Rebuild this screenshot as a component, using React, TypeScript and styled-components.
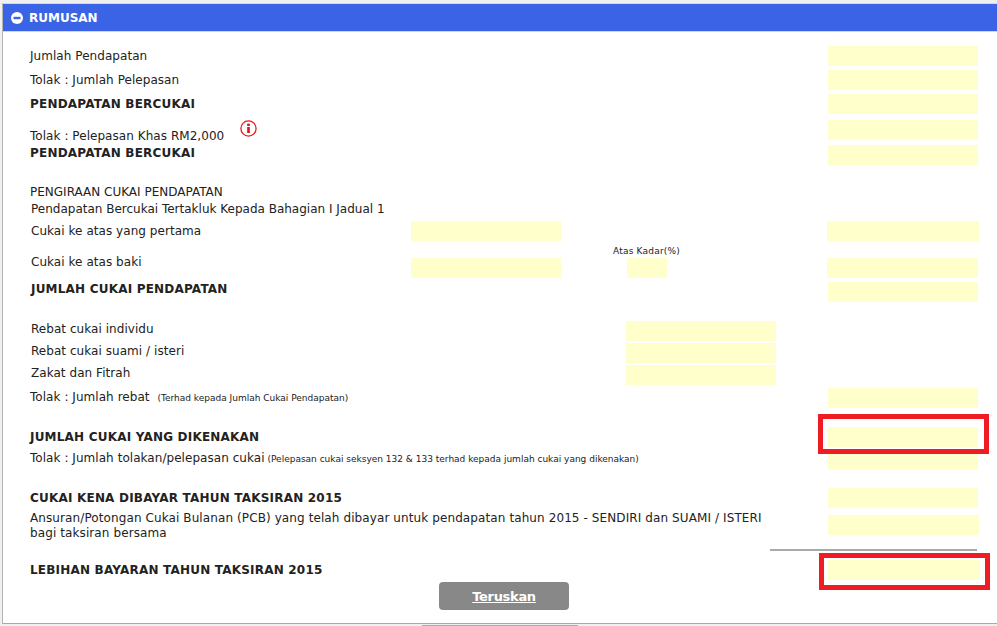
import React from 'react';
import styled, { createGlobalStyle } from 'styled-components';

const GlobalStyle = createGlobalStyle`
  html, body {
    margin: 0;
    padding: 0;
    background: #fff;
  }
  body {
    font-family: "DejaVu Sans", Verdana, sans-serif;
    font-size: 12px;
    line-height: 16px;
    color: #222;
  }
`;

interface IRow {
  h: number;
  top?: number;
  indent?: number;
  bold?: boolean;
  info?: boolean;
  label?: React.ReactNode;
  note?: string;
  noteGap?: number;
  left?: boolean;
  mid?: boolean;
  rate?: boolean;
  right?: boolean;
  fieldTop?: number;
  bleedLeft?: number;
  bleedRight?: number;
  mark?: 'first' | 'second';
}

const Row: React.FC<IRow> = ({
  h, top = 0, indent = 0, bold, info, label, note, noteGap = 0, left, mid, rate,
  right = true, fieldTop = 0, bleedLeft = 0, bleedRight = 0, mark,
}) => (
  <RowWrapper $h={h}>
    <LabelCell $wide={!left && !mid}>
      <Label $top={top} $indent={indent} $bold={bold}>
        {label}
        {note && <Note $gap={noteGap}> {note}</Note>}
      </Label>
      {info && <InfoIcon />}
    </LabelCell>
    {left && <Field $col={2} $top={fieldTop} />}
    {mid && <Field $col={4} />}
    {rate && (
      <RateCell>
        <RateLabel>Atas Kadar(%)</RateLabel>
        <RateField />
      </RateCell>
    )}
    {right && (
      <Field $col={6} $top={fieldTop} $bleedLeft={bleedLeft} $bleedRight={bleedRight}>
        {mark && <RedMark $kind={mark} />}
      </Field>
    )}
  </RowWrapper>
);

const InfoIcon = () => (
  <InfoSvg viewBox="0 0 17 17" width="17" height="17">
    <circle cx="8.5" cy="8.5" r="7.6" fill="#fff" stroke="#e8191f" strokeWidth="1.3" />
    <rect x="7.2" y="7" width="2.6" height="6" fill="#d8141a" />
    <rect x="7.2" y="3.6" width="2.6" height="2.4" fill="#d8141a" />
  </InfoSvg>
);

const App: React.FC = () => {
  return (
    <>
      <GlobalStyle />
      <Page>
        <Panel>
          <Header>
            <Collapse viewBox="0 0 12 12" width="12" height="12">
              <circle cx="6" cy="6" r="6" fill="#fff" />
              <rect x="2.5" y="4.8" width="7" height="2.4" fill="#3b63e6" />
            </Collapse>
            RUMUSAN
          </Header>
          <Body>
            <Row h={24} top={2} label="Jumlah Pendapatan" />
            <Row h={24} top={2} label="Tolak : Jumlah Pelepasan" />
            <Row h={26} top={2} bold label="PENDAPATAN BERCUKAI" />
            <Row h={25} top={8} info label="Tolak : Pelepasan Khas RM2,000" />
            <Row h={38} top={0} bold label="PENDAPATAN BERCUKAI" />
            <Plain $before={1}>PENGIRAAN CUKAI PENDAPATAN</Plain>
            <Plain $indent={1} $after={5} $before={1}>Pendapatan Bercukai Tertakluk Kepada Bahagian I Jadual 1</Plain>
            <Row h={21} top={1} indent={1} left fieldTop={-1} bleedLeft={1} bleedRight={1} label="Cukai ke atas yang pertama" />
            <Row h={39} top={11} indent={1} left rate fieldTop={15} bleedLeft={1} label="Cukai ke atas baki" />
            <Row h={39} top={-1} indent={1} bold label="JUMLAH CUKAI PENDAPATAN" />
            <Row h={22} top={0} indent={1} mid right={false} label="Rebat cukai individu" />
            <Row h={22} top={0} indent={1} mid right={false} label="Rebat cukai suami / isteri" />
            <Row h={23} top={0} indent={1} mid right={false} label="Zakat dan Fitrah" />
            <Row h={39} top={1} noteGap={5} label="Tolak : Jumlah rebat" note="(Terhad kepada Jumlah Cukai Pendapatan)" />
            <Row h={23} top={2} bold mark="first" label="JUMLAH CUKAI YANG DIKENAKAN" />
            <Row h={38} top={0} label="Tolak : Jumlah tolakan/pelepasan cukai" note="(Pelepasan cukai seksyen 132 & 133 terhad kepada jumlah cukai yang dikenakan)" />
            <Row h={27} top={2} bold label="CUKAI KENA DIBAYAR TAHUN TAKSIRAN 2015" />
            <Row h={34} top={-4} bleedRight={1} label={<LongText>Ansuran/Potongan Cukai Bulanan (PCB) yang telah dibayar untuk pendapatan tahun 2015 - SENDIRI dan SUAMI / ISTERI bagi taksiran bersama</LongText>} />
            <Rule />
            <Row h={22} top={2} bold mark="second" bleedRight={2} label="LEBIHAN BAYARAN TAHUN TAKSIRAN 2015" />
            <Actions>
              <Button>Teruskan</Button>
            </Actions>
          </Body>
        </Panel>
        <Scrollbar />
      </Page>
    </>
  );
};

export default App;

// Styles |
//        v

const Page = styled.div`
  width: 997px;
  height: 626px;
  overflow: hidden;
  background: #f0f0f0;
`;

const Panel = styled.div`
  height: 620px;
  margin: 3px 0 0 2px;
  background: #fff;
  border-left: 1px solid #b4b4b4;
  border-bottom: 1px solid #aaa;
  display: flex;
  flex-direction: column;
  overflow: hidden;
`;

const Header = styled.div`
  height: 27px;
  display: flex;
  align-items: center;
  gap: 6px;
  padding-left: 8px;
  background: #3b63e6;
  border-top: 1px solid #d8d8d8;
  border-bottom: 1px solid #cdd6f0;
  color: #fff;
  font-weight: 700;
  font-size: 12px;
`;

const Collapse = styled.svg`
  flex: none;
`;

const Body = styled.div`
  flex: 1;
  padding: 14px 0 0 27px;
`;

const RowWrapper = styled.div<{ $h: number }>`
  display: grid;
  grid-template-columns: 381px 150px 65px 150px 52px 150px;
  align-items: start;
  height: ${({ $h }) => $h}px;
`;

const LabelCell = styled.div<{ $wide: boolean }>`
  grid-column: ${({ $wide }) => ($wide ? '1 / span 4' : '1')};
  display: flex;
  align-items: flex-start;
`;

const Label = styled.div<{ $top: number; $indent: number; $bold?: boolean }>`
  margin-top: ${({ $top }) => $top}px;
  margin-left: ${({ $indent }) => $indent}px;
  font-weight: ${({ $bold }) => ($bold ? 700 : 400)};
  letter-spacing: ${({ $bold }) => ($bold ? 0.2 : 0.05)}px;
  white-space: nowrap;
`;

const Note = styled.span<{ $gap: number }>`
  margin-left: ${({ $gap }) => $gap}px;
  font-size: 9px;
  letter-spacing: 0;
`;

const LongText = styled.div`
  width: 750px;
  white-space: normal;
  line-height: 15px;
  letter-spacing: 0.1px;
`;

const InfoSvg = styled.svg`
  flex: none;
  margin-left: 16px;
`;

const Field = styled.div<{ $col: number; $top?: number; $bleedLeft?: number; $bleedRight?: number }>`
  position: relative;
  grid-column: ${({ $col }) => $col};
  height: 20px;
  margin-top: ${({ $top }) => $top || 0}px;
  margin-left: ${({ $bleedLeft }) => -($bleedLeft || 0)}px;
  margin-right: ${({ $bleedRight }) => -($bleedRight || 0)}px;
  background: #ffffcc;
`;

const RateCell = styled.div`
  grid-column: 4;
  position: relative;
  height: 39px;
`;

const RateLabel = styled.div`
  position: absolute;
  left: -13px;
  top: 1px;
  font-size: 9px;
  line-height: 14px;
  letter-spacing: 0.2px;
  white-space: nowrap;
`;

const RateField = styled.div`
  position: absolute;
  left: 1px;
  top: 15px;
  width: 40px;
  height: 20px;
  background: #ffffcc;
`;

const RedMark = styled.div<{ $kind: 'first' | 'second' }>`
  position: absolute;
  z-index: 2;
  box-sizing: border-box;
  border: 5px solid #f01c24;
  top: ${({ $kind }) => ($kind === 'first' ? -13 : -7)}px;
  left: ${({ $kind }) => ($kind === 'first' ? -10 : -9)}px;
  right: ${({ $kind }) => ($kind === 'first' ? -11 : -10)}px;
  bottom: ${({ $kind }) => ($kind === 'first' ? -7 : -10)}px;
`;

const Plain = styled.div<{ $indent?: number; $before?: number; $after?: number }>`
  margin-left: ${({ $indent }) => $indent || 0}px;
  margin-top: ${({ $before }) => $before || 0}px;
  margin-bottom: ${({ $after }) => $after || 0}px;
`;

const Rule = styled.div`
  width: 207px;
  height: 2px;
  margin: 0 0 9px 740px;
  background: #aaa;
`;

const Actions = styled.div`
  display: flex;
  justify-content: center;
  margin-left: 409px;
  width: 130px;
`;

const Button = styled.button`
  width: 130px;
  height: 28px;
  padding: 0;
  border: none;
  border-radius: 4px;
  background: #888;
  color: #fff;
  font-family: inherit;
  font-size: 13px;
  font-weight: 700;
  letter-spacing: -0.3px;
  text-decoration: underline;
  cursor: pointer;
`;

const Scrollbar = styled.div`
  width: 156px;
  height: 1px;
  margin: 1px 0 0 422px;
  background: #aaa;
`;
